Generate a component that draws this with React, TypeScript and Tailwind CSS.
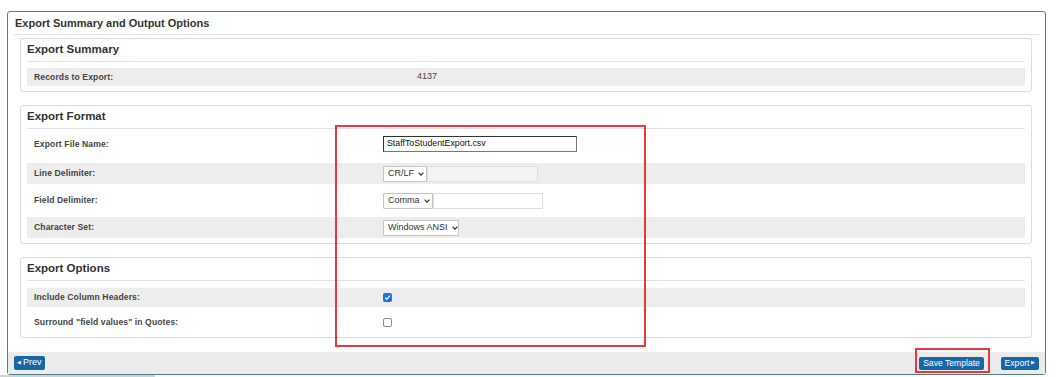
import React from 'react';

const Chevron = () => (
  <svg className="w-[6px] h-[4px] ml-[4px] shrink-0" viewBox="0 0 6 4" fill="none" stroke="#333" strokeWidth={1.2}>
    <path d="M0.6 0.6 L3 3.2 L5.4 0.6" />
  </svg>
);

function Select({ value, width }: { value: string; width: string }) {
  return (
    <div className={`${width} h-[16px] flex items-center justify-between border border-[#c4c4c4] bg-white rounded-[1px] pl-[4px] pr-[4px] text-[9px] text-[#333] whitespace-nowrap`}>
      <span>{value}</span>
      <Chevron />
    </div>
  );
}

function Checkbox({ checked }: { checked: boolean }) {
  if (checked) {
    return (
      <div className="w-[9px] h-[9px] rounded-[2px] bg-[#1a73e8] flex items-center justify-center">
        <svg className="w-[7px] h-[7px]" viewBox="0 0 8 8" fill="none" stroke="white" strokeWidth={1.4}>
          <path d="M1.3 4.2 L3.2 6 L6.8 1.8" />
        </svg>
      </div>
    );
  }
  return <div className="w-[9px] h-[9px] rounded-[2px] border border-[#8a8a8a] bg-white" />;
}

function Panel({ title, children, className = '' }: { title: string; children: React.ReactNode; className?: string }) {
  return (
    <div className={`ml-[12px] w-[1012px] border border-[#dcdcdc] rounded-[3px] ${className}`}>
      <div className="mx-[6px] h-[23px] border-b border-[#e2e2e2] flex items-center text-[11.5px] font-bold text-[#333]">
        {title}
      </div>
      {children}
    </div>
  );
}

const labelCls = 'text-[8.6px] font-bold text-[#444] tracking-[0.1px] whitespace-nowrap';

export default function App() {
  return (
    <div className="relative w-[1056px] h-[377px] bg-white overflow-hidden font-['Liberation_Sans',Arial,sans-serif]">
      <div className="pt-[11px] pl-[7px]">
        <div className="w-[1039px] h-[364px] border border-[#4d7f90] rounded-[3px] flex flex-col">
          <div className="mx-[6px] h-[23px] border-b border-[#e3e3e3] pl-[1px] flex items-center text-[11px] font-bold text-[#333]">
            Export Summary and Output Options
          </div>

          <Panel title="Export Summary" className="mt-[3px]">
            <div className="pt-[6px] pb-[5px] px-[6px]">
              <div className="h-[18px] bg-[#ededed] flex items-center">
                <div className={`w-[390px] pl-[7px] ${labelCls}`}>Records to Export:</div>
                <div className="text-[9px] text-[#444]">4137</div>
              </div>
            </div>
          </Panel>

          <Panel title="Export Format" className="mt-[13px]">
            <div className="px-[6px] pb-[5px]">
              <div className="h-[34px] pb-[4px] flex items-center">
                <div className={`w-[356px] pl-[7px] ${labelCls}`}>Export File Name:</div>
                <div className="w-[194px] h-[16px] flex items-center border border-[#777] border-t-[#333] border-l-[#333] bg-white px-[3px] text-[8.8px] text-[#111] whitespace-nowrap">
                  StaffToStudentExport.csv
                </div>
              </div>
              <div className="h-[21px] bg-[#ededed] flex items-center">
                <div className={`w-[356px] pl-[7px] ${labelCls}`}>Line Delimiter:</div>
                <Select value="CR/LF" width="w-[44px]" />
                <div className="w-[111px] h-[16px] border border-[#e0e0e0] bg-[#f3f3f3]" />
              </div>
              <div className="h-[33px] flex items-center">
                <div className={`w-[356px] pl-[7px] ${labelCls}`}>Field Delimiter:</div>
                <Select value="Comma" width="w-[50px]" />
                <div className="w-[110px] h-[16px] border border-[#dedede] bg-white" />
              </div>
              <div className="h-[21px] bg-[#ededed] flex items-center">
                <div className={`w-[356px] pl-[7px] ${labelCls}`}>Character Set:</div>
                <Select value="Windows ANSI" width="w-[76px]" />
              </div>
            </div>
          </Panel>

          <Panel title="Export Options" className="mt-[13px]">
            <div className="px-[6px] pt-[7px]">
              <div className="h-[19px] bg-[#ededed] flex items-center">
                <div className={`w-[356px] pl-[7px] ${labelCls}`}>Include Column Headers:</div>
                <Checkbox checked />
              </div>
              <div className="h-[30px] flex items-center">
                <div className={`w-[356px] pl-[7px] ${labelCls}`}>Surround "field values" in Quotes:</div>
                <Checkbox checked={false} />
              </div>
            </div>
          </Panel>

          <div className="mt-auto h-[22px] bg-[#ebebeb] flex items-center px-[6px]">
            <button className="h-[14px] pl-[3px] pr-[3px] rounded-[2px] bg-[#1766a6] text-white text-[9px] flex items-center gap-[2px]">
              <span className="text-[5px]">◀</span>Prev
            </button>
            <div className="ml-auto flex items-center gap-[17px]">
              <button className="h-[13px] w-[65px] rounded-[2px] bg-[#1766a6] text-white text-[8.6px] flex items-center justify-center whitespace-nowrap">
                Save Template
              </button>
              <button className="h-[13px] w-[38px] rounded-[2px] bg-[#1766a6] text-white text-[8.6px] flex items-center justify-center gap-[2px]">
                Export<span className="text-[5px]">▶</span>
              </button>
            </div>
          </div>
        </div>
      </div>
      <div className="w-[155px] h-[2px] bg-[#d2d2d2]" />

      {/* annotation boxes drawn over the screenshot */}
      <div className="absolute left-[335px] top-[125px] w-[311px] h-[222px] border-2 border-[#e8393d] pointer-events-none" />
      <div className="absolute left-[915px] top-[348px] w-[75px] h-[25px] border-2 border-[#e8393d] pointer-events-none" />
    </div>
  );
}
